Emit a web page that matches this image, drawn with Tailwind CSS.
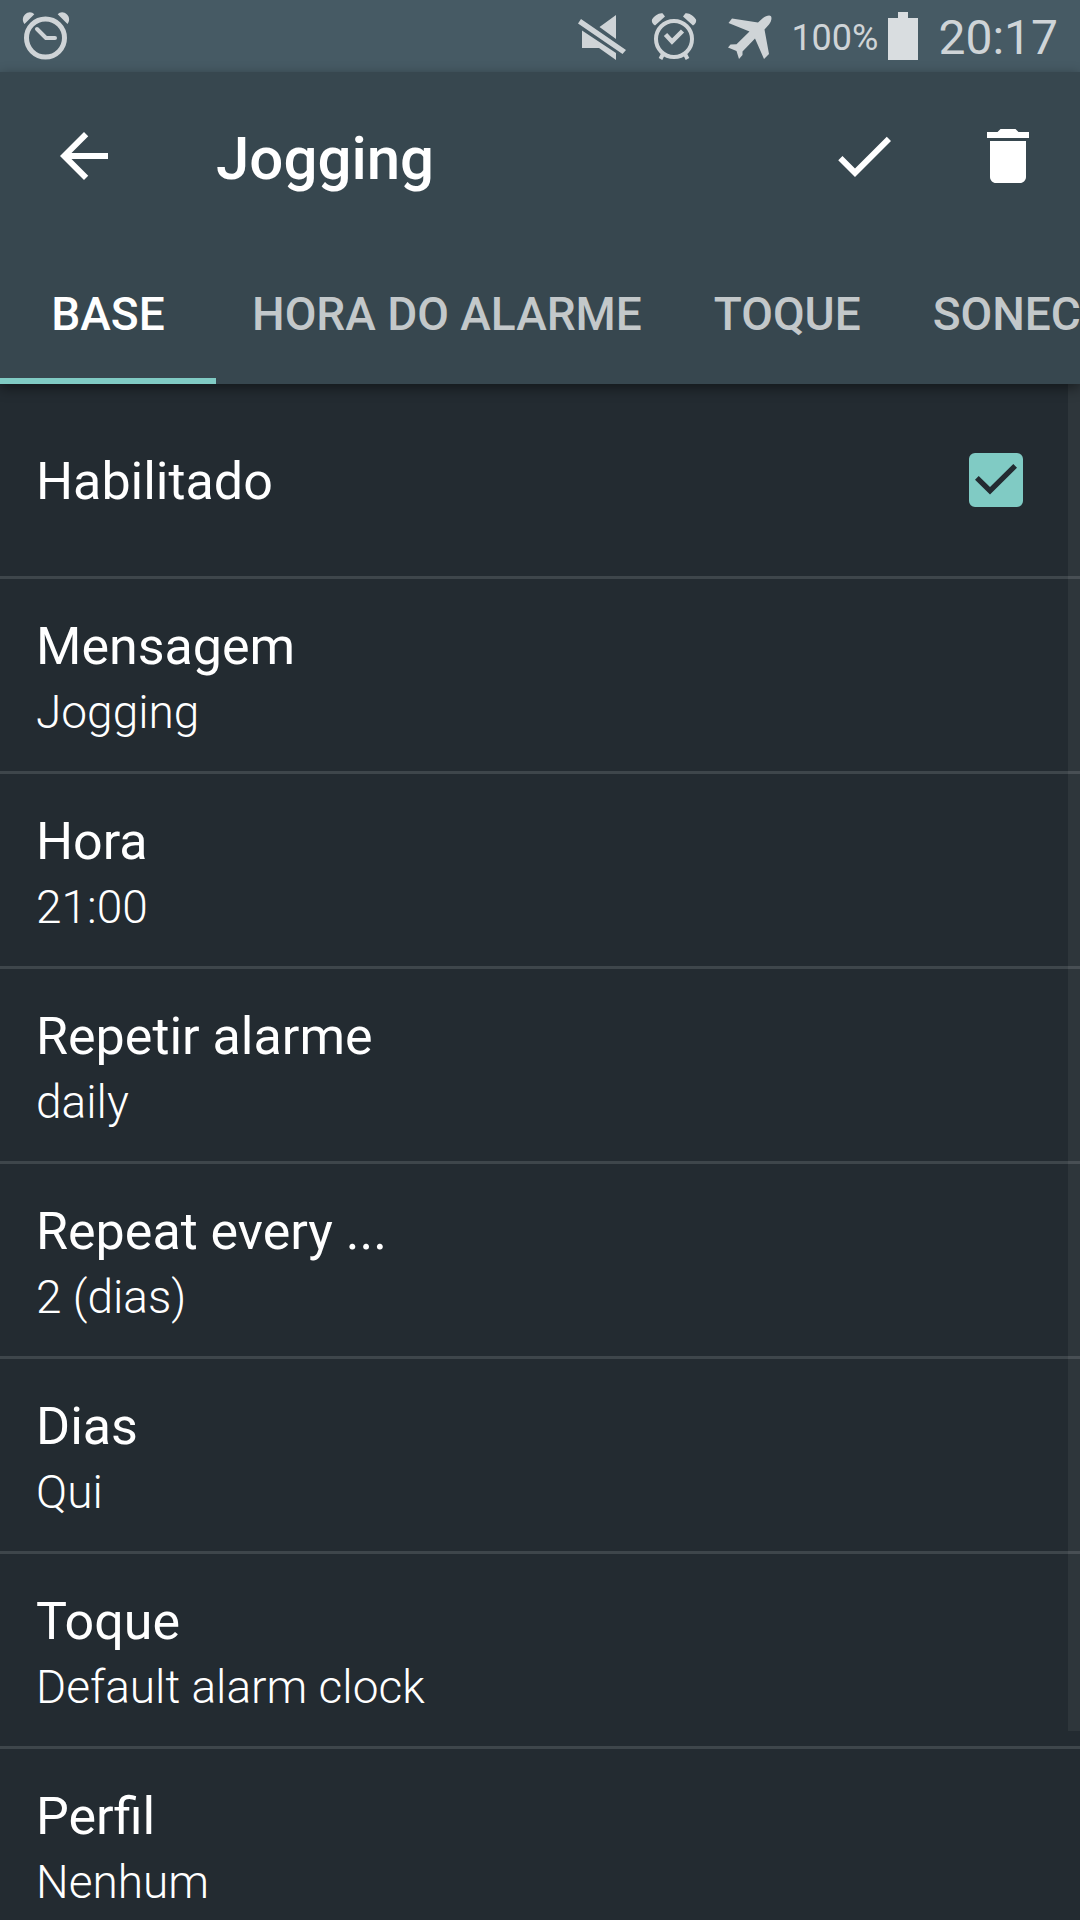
<!DOCTYPE html>
<html lang="pt">
<head>
<meta charset="utf-8">
<meta name="viewport" content="width=device-width, initial-scale=1">
<title>Jogging</title>
<script src="https://cdn.jsdelivr.net/npm/@tailwindcss/browser@4"></script>
</head>
<body class="flex h-screen flex-col overflow-hidden bg-[#232b31] font-[Roboto,sans-serif] text-white">

<!-- Status bar -->
<div class="flex h-[72px] shrink-0 items-center bg-[#465a64] pl-[22px] pr-[22px] text-[#cfd4d7]">
  <svg class="h-[50px] w-12" viewBox="22 12 48 50" aria-hidden="true">
    <circle cx="45.500" cy="39" r="19" fill="none" stroke="currentColor" stroke-width="5"/>
    <path d="M37 30l9 9h9" fill="none" stroke="currentColor" stroke-width="4" stroke-linecap="round" stroke-linejoin="round"/>
    <path d="M24.500 25C22 22 22.500 18 25 15.500C28 12.500 32 12.700 34.300 15.300ZM67.500 25C70 22 69.500 18 67 15.500C64 12.500 60 12.700 57.700 15.300Z" fill="currentColor"/>
  </svg>
  <div class="ml-auto flex items-center">
    <svg class="h-12 w-12" viewBox="580 12 48 48" fill="currentColor" aria-hidden="true">
      <path d="M618 15V39L601.500 27ZM584 30.500L618 53V60L601 48H584ZM583 19L628 50L624.500 54L580 23.500Z"/>
    </svg>
    <svg class="ml-[25px] h-12 w-[46px]" viewBox="653 13 46 48" fill="none" stroke="currentColor" aria-hidden="true">
      <circle cx="676" cy="40" r="18" stroke-width="4"/>
      <path d="M667.500 35.500L674 42.500L684.500 32" stroke-width="4.500"/>
      <path d="M665 55L662.500 60M687 55L689.500 60" stroke-width="4"/>
      <path d="M654 20.500C656 17 661 13.500 664.500 14.300L667 17.500L657 26.500C654.500 25 653.300 22.500 654 20.500ZM698 20.500C696 17 691 13.500 687.500 14.300L685 17.500L695 26.500C697.500 25 698.700 22.500 698 20.500Z" fill="currentColor" stroke="none"/>
    </svg>
    <svg class="ml-[30px] h-12 w-[46px]" viewBox="729 12 46 48" fill="currentColor" aria-hidden="true">
      <path d="M773 16.200C774.200 18.500 773 22 771 24.500L766.500 29.500L771 54L766 59L757 38.500L744.500 51.500V55L741 59L738.500 51L730 47.500L732.500 44.500L738.500 44.300L751.500 31.500L730.500 23L734 18.500L760 22.500L765 18C767.500 16 771.500 14.800 773 16.200Z"/>
    </svg>
    <span class="ml-[18px] pt-1 text-[36px] leading-[48px]">100%</span>
    <svg class="ml-[10px] h-12 w-[30px]" viewBox="0 0 30 48" fill="#d9dde0" aria-hidden="true">
      <path d="M0 6H10V0H20V6H30V48H0Z"/>
    </svg>
    <span class="ml-5 pt-1 text-[48px] leading-[56px]">20:17</span>
  </div>
</div>

<header class="relative z-10 shrink-0 bg-[#37474f] shadow-[0_4px_12px_rgba(0,0,0,0.45)]">
  <div class="flex h-[168px] items-center">
    <button type="button" aria-label="Voltar" class="flex h-[168px] w-[168px] items-center justify-center">
      <svg class="size-[72px]" viewBox="0 0 24 24" fill="currentColor"><path d="M20 11H7.830l5.590-5.590L12 4l-8 8 8 8 1.410-1.410L7.830 13H20v-2z"/></svg>
    </button>
    <h1 class="ml-12 flex-1 pt-1.5 text-[60px] leading-[72px] font-medium">Jogging</h1>
    <button type="button" aria-label="Salvar" class="flex size-36 items-center justify-center">
      <svg class="size-[72px]" viewBox="0 0 24 24" fill="currentColor"><path d="M9 16.170L4.830 12l-1.420 1.410L9 19 21 7l-1.410-1.410z"/></svg>
    </button>
    <button type="button" aria-label="Excluir" class="flex size-36 items-center justify-center">
      <svg class="size-[72px]" viewBox="0 0 24 24" fill="currentColor"><path d="M6 19c0 1.100.9 2 2 2h8c1.100 0 2-.9 2-2V7H6v12zM19 4h-3.500l-1-1h-5l-1 1H5v2h14V4z"/></svg>
    </button>
  </div>
  <nav class="flex h-36 overflow-hidden text-[46px] leading-[54px] font-medium whitespace-nowrap text-[#c3c8ca]">
    <a href="#base" aria-current="page" class="flex min-w-[216px] shrink-0 items-center justify-center border-b-[6px] border-[#80cbc4] px-9 pt-[10px] text-white">BASE</a>
    <a href="#hora" class="flex shrink-0 items-center px-9 pt-1">HORA DO ALARME</a>
    <a href="#toque" class="flex shrink-0 items-center px-9 pt-1">TOQUE</a>
    <a href="#soneca" class="flex shrink-0 items-center px-9 pt-1">SONECA</a>
  </nav>
</header>

<main class="relative min-h-0 flex-1 overflow-hidden">
  <div class="text-[52px] leading-[66px]">
    <div class="flex h-[195px] items-center justify-between border-b-[3px] border-[#3e464b] pr-[57px] pl-9">
      <label for="enabled" class="pt-1">Habilitado</label>
      <span class="relative size-[54px]">
        <input id="enabled" type="checkbox" checked class="peer block size-[54px] appearance-none rounded-[6px] border-[6px] border-[#80cbc4] checked:bg-[#80cbc4]">
        <svg class="pointer-events-none invisible absolute inset-0 size-[54px] peer-checked:visible" viewBox="0 0 54 54" fill="#232b31" aria-hidden="true"><path d="M6 26.700L9.700 23L21 34L44.300 11L48 14.700L21 41.500Z"/></svg>
      </span>
    </div>
    <button type="button" class="flex h-[195px] w-full flex-col justify-center gap-0.5 border-b-[3px] border-[#3e464b] px-9 pt-1.5 text-left"><span>Mensagem</span><span class="text-[46px] leading-[60px] font-light">Jogging</span></button>
    <button type="button" class="flex h-[195px] w-full flex-col justify-center gap-0.5 border-b-[3px] border-[#3e464b] px-9 pt-1.5 text-left"><span>Hora</span><span class="text-[46px] leading-[60px] font-light">21:00</span></button>
    <button type="button" class="flex h-[195px] w-full flex-col justify-center gap-0.5 border-b-[3px] border-[#3e464b] px-9 pt-1.5 text-left"><span>Repetir alarme</span><span class="text-[46px] leading-[60px] font-light">daily</span></button>
    <button type="button" class="flex h-[195px] w-full flex-col justify-center gap-0.5 border-b-[3px] border-[#3e464b] px-9 pt-1.5 text-left"><span>Repeat every ...</span><span class="text-[46px] leading-[60px] font-light">2 (dias)</span></button>
    <button type="button" class="flex h-[195px] w-full flex-col justify-center gap-0.5 border-b-[3px] border-[#3e464b] px-9 pt-1.5 text-left"><span>Dias</span><span class="text-[46px] leading-[60px] font-light">Qui</span></button>
    <button type="button" class="flex h-[195px] w-full flex-col justify-center gap-0.5 border-b-[3px] border-[#3e464b] px-9 pt-1.5 text-left"><span>Toque</span><span class="text-[46px] leading-[60px] font-light">Default alarm clock</span></button>
    <button type="button" class="flex h-[195px] w-full flex-col justify-center gap-0.5 border-b-[3px] border-[#3e464b] px-9 pt-1.5 text-left"><span>Perfil</span><span class="text-[46px] leading-[60px] font-light">Nenhum</span></button>
  </div>
  <!-- Scroll indicator -->
  <div class="pointer-events-none absolute top-0 right-0 h-[87.700%] w-3 bg-white/5"></div>
</main>
</body>
</html>
